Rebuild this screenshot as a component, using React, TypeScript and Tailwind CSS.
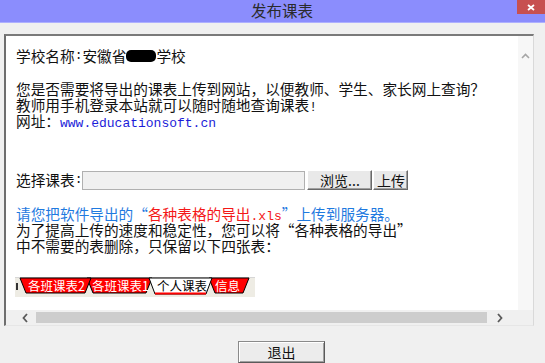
import React from "react";

const Colon = ({ t = ":" }: { t?: string }) => (
  <span className="font-['Liberation_Mono',monospace] text-[13px]">{t}</span>
);

const LQ = () => <span className="inline-block w-[14.67px] text-right">“</span>;
const RQ = () => <span className="inline-block w-[14.67px] text-left">”</span>;

function Tabs() {
  return (
    <svg width="240" height="20" viewBox="0 0 240 20" className="block">
      <rect x="0" y="0" width="240" height="20" fill="#eeece4" />
      <line x1="0" y1="0.5" x2="240" y2="0.5" stroke="#d6d6d6" />
      <rect x="1" y="6" width="2" height="7" fill="#333" />
      <g fontFamily="'Noto Sans CJK SC', sans-serif" fontSize="12.5">
        <polygon points="194,1 234,1 228,16 200,16" fill="#ff0000" stroke="#000" strokeWidth="1" />
        <text x="200" y="13.5" fill="#fff">信息</text>
        <polygon points="72,1 137,1 131,16 78,16" fill="#ff0000" stroke="#000" strokeWidth="1" />
        <text x="77" y="13.5" fill="#fff">各班课表1</text>
        <polygon points="5,1 76,1 70,16 11,16" fill="#ff0000" stroke="#000" strokeWidth="1" />
        <text x="13" y="13.5" fill="#fff">各班课表2</text>
        <polygon points="134,1 197,1 191,17 140,17" fill="#fff" stroke="#000" strokeWidth="1" />
        <line x1="140" y1="16.5" x2="191" y2="16.5" stroke="#ff0000" strokeWidth="2" />
        <text x="142" y="13.5" fill="#000">个人课表</text>
      </g>
    </svg>
  );
}

const btn =
  "h-[20px] bg-[#e9e9e9] border border-t-white border-l-white border-r-[#696969] border-b-[#696969] shadow-[inset_-1px_-1px_0_#a0a0a0] flex items-center justify-center text-[14px] leading-none text-[#111]";

export default function App() {
  return (
    <div className="w-[545px] h-[363px] bg-[#f0f0f0] overflow-hidden relative flex flex-col font-['Noto_Sans_CJK_SC','Noto_Sans',sans-serif] text-[#111]">
      {/* title bar */}
      <div className="h-[23px] shrink-0 bg-[#8b8dfd] border-b border-[#aeb0ff] flex items-center justify-center pl-[19px] relative">
        <span className="text-[15.5px] leading-none text-[#2a2a2a]">发布课表</span>
        <div className="absolute right-0 top-0 w-[28px] h-[14px] bg-[#c75050] flex items-center justify-center">
          <svg width="8" height="7" viewBox="0 0 8 7">
            <path d="M1 1 L7 6 M7 1 L1 6" stroke="#fff" strokeWidth="1.8" />
          </svg>
        </div>
      </div>

      {/* panel */}
      <div className="mt-[11px] ml-[4px] w-[530px] h-[292px] border-t-2 border-l-2 border-t-[#7a7a7a] border-l-[#6e6e6e] border-r border-b border-r-[#d9d9d9] border-b-[#e6e6e6] flex flex-col">
        <div className="flex h-[274px]">
          <div className="w-[512px] h-full bg-white pl-[10px] pt-[12px] text-[14.67px] leading-[16px]">
            <div className="h-[16px] flex items-center whitespace-nowrap">
              <span>学校名称</span>
              <Colon />
              <span>安徽省</span>
              <span className="inline-block w-[30px] h-[12px] bg-black rounded-[5px]" />
              <span>学校</span>
            </div>
            <div className="mt-[17px] whitespace-nowrap">
              <div className="h-[16px]">您是否需要将导出的课表上传到网站，以便教师、学生、家长网上查询？</div>
              <div className="h-[16px]">
                教师用手机登录本站就可以随时随地查询课表<Colon t="!" />
              </div>
              <div className="h-[16px]">
                网址：<span className="font-['Liberation_Mono',monospace] text-[13px] text-[#1c1cd9]">www.educationsoft.cn</span>
              </div>
            </div>
            <div className="mt-[41px] flex items-center h-[20px] whitespace-nowrap">
              <span>选择课表</span>
              <Colon />
              <div className="w-[223px] h-[19px] bg-[#f0f0f0] border border-[#b0b0b0]" />
              <div className={btn + " ml-[2px] w-[65px]"}>浏览...</div>
              <div className={btn + " ml-[1px] w-[35px]"}>上传</div>
            </div>
            <div className="mt-[16px] whitespace-nowrap">
              <div className="h-[16px] text-[#1f7ae0]">
                请您把软件导出的<LQ />
                <span className="text-[#f41818]">
                  各种表格的导出<span className="font-['Liberation_Mono',monospace] text-[13px]">.xls</span>
                </span>
                <RQ />上传到服务器。
              </div>
              <div className="h-[16px]">
                为了提高上传的速度和稳定性，您可以将<LQ />各种表格的导出<RQ />
              </div>
              <div className="h-[16px]">中不需要的表删除，只保留以下四张表：</div>
            </div>
            <div className="mt-[23px] -ml-[1px]">
              <Tabs />
            </div>
          </div>
          <div className="w-[15px] h-full bg-[#f7f7f7] flex justify-center pt-[17px]">
            <svg width="9" height="6" viewBox="0 0 9 6">
              <path d="M1 5 L4.5 1.5 L8 5" stroke="#a6a6a6" strokeWidth="1.6" fill="none" />
            </svg>
          </div>
        </div>
        <div className="h-[15px] bg-[#f0f0f0] flex">
          <div className="w-[30px] h-full flex items-center pl-[16px]">
            <svg width="6" height="10" viewBox="0 0 6 10">
              <path d="M5 1 L1.5 5 L5 9" stroke="#5a5a5a" strokeWidth="1.8" fill="none" />
            </svg>
          </div>
          <div className="w-[451px] my-[2px] bg-[#cdcdcd]" />
          <div className="w-[31px] h-full flex items-center pl-[10px]">
            <svg width="6" height="10" viewBox="0 0 6 10">
              <path d="M1 1 L4.5 5 L1 9" stroke="#5a5a5a" strokeWidth="1.8" fill="none" />
            </svg>
          </div>
          <div className="w-[15px] h-full" />
        </div>
      </div>

      {/* exit button */}
      <div className="mt-[15px] ml-[238px] w-[87px] h-[23px] bg-[#ececec] border border-[#8a8a8a] border-r-[#5a5a5a] border-b-[#5a5a5a] shadow-[inset_1px_1px_0_#ffffff,inset_-1px_-1px_0_#a0a0a0] flex items-center justify-center text-[14px] leading-none text-[#111]">
        退出
      </div>
    </div>
  );
}
